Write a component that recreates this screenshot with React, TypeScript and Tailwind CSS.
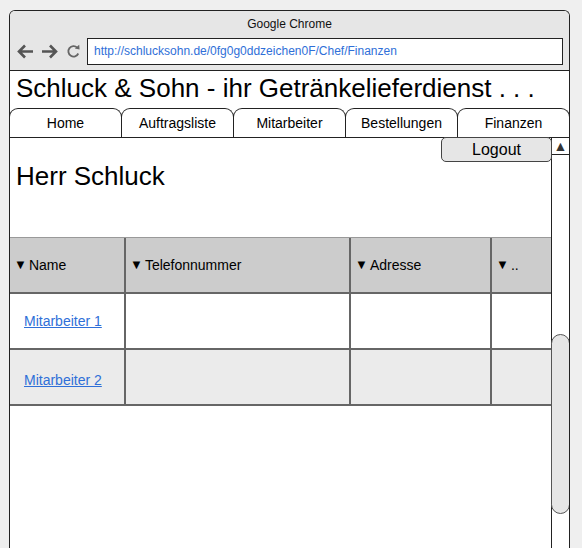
import React from "react";

const font = { fontFamily: '"Liberation Sans", Arial, sans-serif' };

function Back() {
  return (
    <svg width="17" height="15" viewBox="0 0 17 15">
      <path d="M8 1.5 L2 7.5 L8 13.5 M2.5 7.5 H16" fill="none" stroke="#555" strokeWidth="2.6" strokeLinejoin="miter" />
    </svg>
  );
}
function Fwd() {
  return (
    <svg width="17" height="15" viewBox="0 0 17 15">
      <path d="M9 1.5 L15 7.5 L9 13.5 M14.5 7.5 H1" fill="none" stroke="#555" strokeWidth="2.6" strokeLinejoin="miter" />
    </svg>
  );
}
function Reload() {
  return (
    <svg width="15" height="15" viewBox="0 0 15 15">
      <path d="M12.3 9.5 A5.2 5.2 0 1 1 11.2 3.6" fill="none" stroke="#666" strokeWidth="1.8" />
      <path d="M8.8 4.6 L13.6 5.4 L13.2 0.8 Z" fill="#666" />
    </svg>
  );
}

const tabs = ["Home", "Auftragsliste", "Mitarbeiter", "Bestellungen", "Finanzen"];

export default function App() {
  return (
    <div className="w-[582px] h-[548px] bg-[#efefef] overflow-hidden pt-[10px] pl-[9px]" style={font}>
      <div className="w-[561px] h-[560px] bg-white border border-b-0 border-[#222] rounded-t-[6px] flex flex-col overflow-hidden">
        {/* title bar */}
        <div className="h-[60px] bg-[#e6e6e6] border-b border-[#222] flex flex-col shrink-0">
          <div className="h-[25px] flex items-end justify-center text-[12px] text-[#111] leading-none pb-[6px]">Google Chrome</div>
          <div className="flex items-center h-[28px] mt-[1px]">
            <div className="flex items-center ml-[7px] gap-[7px]">
              <Back />
              <Fwd />
              <div className="ml-[1px]"><Reload /></div>
            </div>
            <div className="ml-[6px] w-[476px] h-[27px] bg-white border border-[#222] flex items-center pl-[6px] text-[12px] text-[#2f6fd8]">
              http://schlucksohn.de/0fg0g0ddzeichen0F/Chef/Finanzen
            </div>
          </div>
        </div>
        {/* header */}
        <div className="h-[37px] flex items-center pl-[6px] text-[26px] text-black leading-none shrink-0 pb-[4px]">
          Schluck &amp; Sohn - ihr Getränkelieferdienst . . .
        </div>
        {/* tabs */}
        <div className="h-[30px] flex border-b border-[#222] shrink-0 -ml-px">
          {tabs.map((t) => (
            <div
              key={t}
              className="flex-1 -mr-px border border-b-0 border-[#222] rounded-t-[9px] flex items-center justify-center text-[14px] text-black pt-[1px]"
            >
              {t}
            </div>
          ))}
        </div>
        {/* body */}
        <div className="flex flex-1">
          <div className="flex-1 flex flex-col">
            <div className="flex justify-end -mt-px">
              <div className="relative z-10 -mr-px w-[111px] h-[25px] bg-[#e6e6e6] border border-[#444] rounded-[5px] flex items-center justify-center text-[16px] text-black">
                Logout
              </div>
            </div>
            <div className="pl-[6px] text-[26px] leading-none text-black h-[28px] flex items-center">Herr Schluck</div>
            <div className="mt-[47px] flex flex-col">
              <div className="flex h-[57px] bg-[#cccccc] border-t border-[#999] border-b-2 border-b-[#666] text-[14px] text-black">
                <div className="w-[116px] border-r-2 border-[#666] flex items-center pl-[4px]"><span className="text-[13px] mr-[2px]">▼</span>Name</div>
                <div className="w-[225px] border-r-2 border-[#666] flex items-center pl-[4px]"><span className="text-[13px] mr-[2px]">▼</span>Telefonnummer</div>
                <div className="w-[141px] border-r-2 border-[#666] flex items-center pl-[4px]"><span className="text-[13px] mr-[2px]">▼</span>Adresse</div>
                <div className="flex-1 flex items-center pl-[4px]"><span className="text-[13px] mr-[2px]">▼</span>..</div>
              </div>
              {["Mitarbeiter 1", "Mitarbeiter 2"].map((m, i) => (
                <div key={m} className={`flex h-[56px] border-b-2 border-[#666] text-[14px] ${i === 1 ? "bg-[#ebebeb]" : "bg-white"}`}>
                  <div className={`w-[116px] border-r-2 border-[#666] flex items-center pl-[14px] ${i === 1 ? "pt-[6px]" : ""}`}>
                    <span className="text-[#2f6fd8] underline">{m}</span>
                  </div>
                  <div className="w-[225px] border-r-2 border-[#666]" />
                  <div className="w-[141px] border-r-2 border-[#666]" />
                  <div className="flex-1" />
                </div>
              ))}
            </div>
          </div>
          {/* scrollbar */}
          <div className="w-[18px] border-l border-[#222] flex flex-col">
            <div className="h-[17px] border-b border-[#222] flex items-center justify-center text-[14px] text-[#333] leading-none">▲</div>
            <div className="mt-[179px] h-[180px] bg-[#e6e6e6] border border-[#555] rounded-full -mx-px" />
          </div>
        </div>
      </div>
    </div>
  );
}
